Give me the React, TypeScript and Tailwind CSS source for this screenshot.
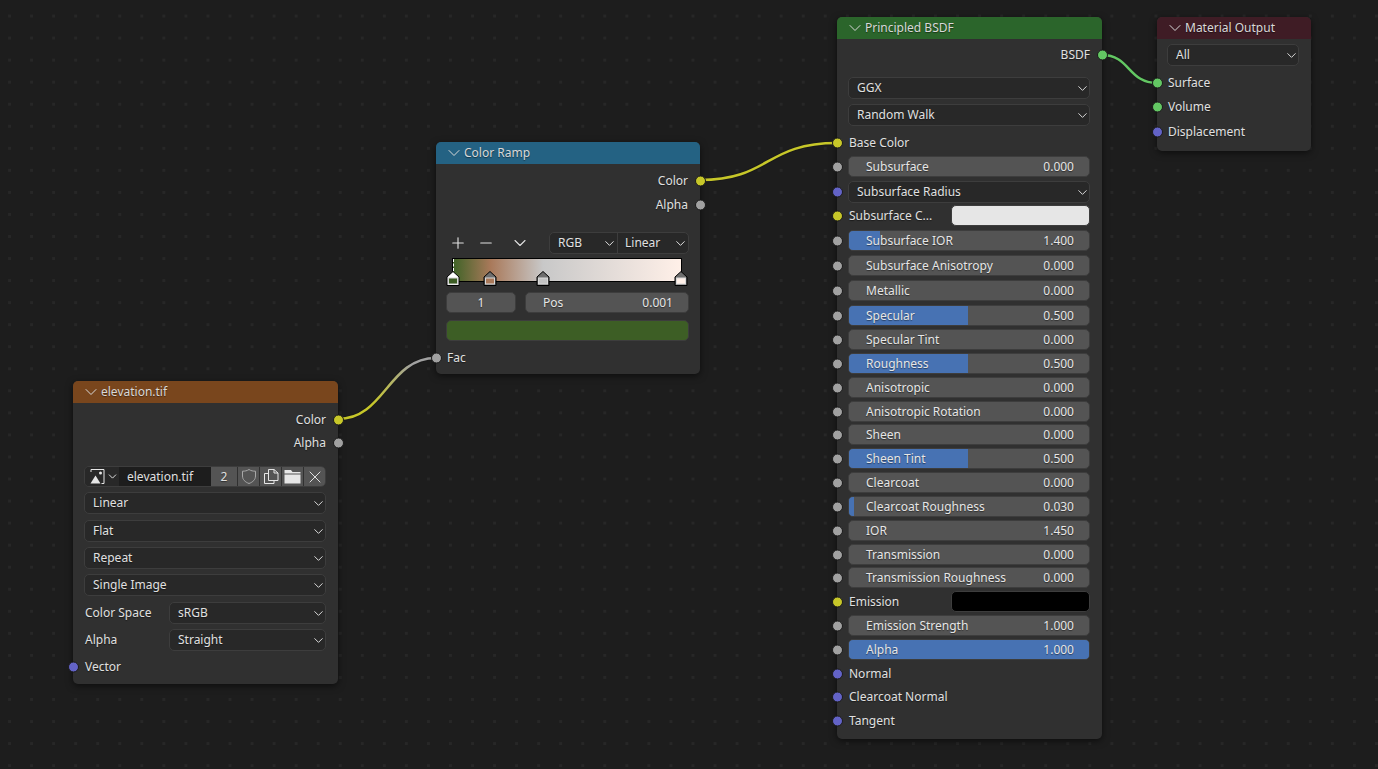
import type { ReactNode } from 'react';
import { ChevronDown, Minus, Plus, X } from 'lucide-react';

const YELLOW = 'bg-[#c7c729]';
const GRAY = 'bg-[#a1a1a1]';
const PURPLE = 'bg-[#6363c7]';
const GREEN = 'bg-[#63c763]';

type SocketSide = 'left' | 'right';

function Socket({ color, side = 'left' }: { color: string; side?: SocketSide }) {
  return (
    <span
      className={`absolute top-1/2 h-[11px] w-[11px] -translate-y-1/2 rounded-full border border-[#1a1a1a] ${color} ${
        side === 'left' ? 'left-[-5.5px]' : 'right-[-5.5px]'
      }`}
    />
  );
}

function NodeFrame({
  title,
  header,
  className,
  children,
}: {
  title: string;
  header: string;
  className: string;
  children: ReactNode;
}) {
  return (
    <div className={`absolute rounded-[5px] bg-[#303030] shadow-[0_2px_7px_rgba(0,0,0,0.55)] ${className}`}>
      <div className={`flex h-[22px] items-center rounded-t-[5px] pl-[8px] text-[#d8d8d8] ${header}`}>
        <ChevronDown size={20} strokeWidth={1.2} />
        <span>{title}</span>
      </div>
      {children}
    </div>
  );
}

function OutputRow({ label, color, h }: { label: string; color: string; h: string }) {
  return (
    <div className={h}>
      <div className="relative flex h-[20px] items-center justify-end pr-[12px] text-[#e0e0e0]">
        {label}
        <Socket color={color} side="right" />
      </div>
    </div>
  );
}

function InputRow({
  label,
  color,
  h,
  pad = 'pl-[12px]',
}: {
  label: string;
  color: string;
  h: string;
  pad?: string;
}) {
  return (
    <div className={h}>
      <div className={`relative flex h-[20px] items-center text-[#e0e0e0] ${pad}`}>
        {label}
        <Socket color={color} />
      </div>
    </div>
  );
}

function Select({ label }: { label: string }) {
  return (
    <div className="flex h-[22px] flex-1 items-center justify-between rounded-[5px] border border-[#3d3d3d] bg-[#282828] pl-[8px] text-[#e0e0e0]">
      <span>{label}</span>
      <ChevronDown size={15} strokeWidth={1.6} className="-mr-[1px] text-[#d8d8d8]" />
    </div>
  );
}

function SelectRow({ label, h, socket }: { label: string; h: string; socket?: string }) {
  return (
    <div className={h}>
      <div className="relative flex pl-[11px] pr-[12px]">
        <Select label={label} />
        {socket && <Socket color={socket} />}
      </div>
    </div>
  );
}

function LabeledSelect({ label, value, h }: { label: string; value: string; h: string }) {
  return (
    <div className={h}>
      <div className="flex items-center pl-[11px] pr-[12px] text-[#e0e0e0]">
        <span className="w-[85px] pl-[1px]">{label}</span>
        <Select label={value} />
      </div>
    </div>
  );
}

function Slider({
  label,
  value,
  h,
  fill,
}: {
  label: string;
  value: string;
  h: string;
  fill?: string;
}) {
  return (
    <div className={h}>
      <div className="relative pl-[11px] pr-[12px]">
        <div className="relative flex h-[21px] items-center justify-between overflow-hidden rounded-[5px] border border-[#3d3d3d] bg-[#545454] pl-[17px] pr-[15px] text-[#e6e6e6]">
          {fill && <span className={`absolute inset-y-0 left-0 bg-[#4772b3] ${fill}`} />}
          <span className="relative">{label}</span>
          <span className="relative">{value}</span>
        </div>
        <Socket color={GRAY} />
      </div>
    </div>
  );
}

function ColorRow({ label, swatch, h }: { label: string; swatch: string; h: string }) {
  return (
    <div className={h}>
      <div className="relative flex items-center pl-[12px] pr-[12px] text-[#e0e0e0]">
        <span className="w-[102px]">{label}</span>
        <span className={`h-[21px] flex-1 rounded-[5px] border border-[#3d3d3d] ${swatch}`} />
        <Socket color={YELLOW} />
      </div>
    </div>
  );
}

function RampHandle({ fill, active, className }: { fill: string; active?: boolean; className: string }) {
  return (
    <svg width="14" height="16" viewBox="0 0 14 16" className={`absolute top-[11px] ${className}`}>
      <path d="M1 15.5V7L7 1.5 13 7V15.5Z" fill={active ? '#ffffff' : '#6e6e6e'} stroke="#000000" strokeWidth="1" />
      <rect x="2" y="7.5" width="10" height="7" fill="#d8d8d8" />
      <rect x="3" y="8.5" width="8" height="5" fill={fill} />
    </svg>
  );
}

function ColorRampNode() {
  return (
    <NodeFrame title="Color Ramp" header="bg-[#246283]" className="left-[436px] top-[142px] h-[232px] w-[264px]">
      <div className="pt-[7px]">
        <OutputRow label="Color" color={YELLOW} h="h-[24px]" />
        <OutputRow label="Alpha" color={GRAY} h="h-[37px]" />
      </div>
      <div className="flex h-[22px] items-center pl-[13px] pr-[11px] text-[#e0e0e0]">
        <Plus size={18} strokeWidth={1.5} />
        <Minus size={18} strokeWidth={1.5} className="ml-[10px]" />
        <ChevronDown size={20} strokeWidth={1.3} className="ml-[15px]" />
        <div className="ml-[19px] flex h-[22px] flex-1 rounded-[5px] border border-[#3d3d3d] bg-[#282828]">
          <div className="flex w-[68px] items-center justify-between border-r border-[#3d3d3d] pl-[8px]">
            <span>RGB</span>
            <ChevronDown size={15} strokeWidth={1.6} />
          </div>
          <div className="flex flex-1 items-center justify-between pl-[7px]">
            <span>Linear</span>
            <ChevronDown size={15} strokeWidth={1.6} />
          </div>
        </div>
      </div>
      <div className="relative ml-[16px] mr-[18px] mt-[4px] h-[24px] border border-black bg-[linear-gradient(90deg,#3f6327_0%,#a9795a_16.5%,#c8c8c8_39.5%,#fff0e8_100%)]">
        <span className="absolute left-0 top-0 h-[12px] border-l border-dashed border-white" />
        <RampHandle fill="#3d5e25" active className="left-[-7px]" />
        <RampHandle fill="#a9795a" className="left-[30px]" />
        <RampHandle fill="#c4c4c4" className="left-[83px]" />
        <RampHandle fill="#fff0e8" className="left-[221px]" />
      </div>
      <div className="mt-[10px] flex gap-[9px] pl-[10px] pr-[11px] text-[#e6e6e6]">
        <div className="flex h-[21px] w-[70px] items-center justify-center rounded-[5px] border border-[#3d3d3d] bg-[#545454]">1</div>
        <div className="flex h-[21px] flex-1 items-center justify-between rounded-[5px] border border-[#3d3d3d] bg-[#545454] pl-[17px] pr-[15px]">
          <span>Pos</span>
          <span>0.001</span>
        </div>
      </div>
      <div className="ml-[10px] mr-[11px] mt-[7px] h-[21px] rounded-[5px] border border-[#3d3d3d] bg-[#3d5e25]" />
      <div className="mt-[7px]">
        <InputRow label="Fac" color={GRAY} h="h-[20px]" pad="pl-[11px]" />
      </div>
    </NodeFrame>
  );
}

function ImageTextureNode() {
  return (
    <NodeFrame title="elevation.tif" header="bg-[#79461d]" className="left-[73px] top-[381px] h-[303px] w-[265px]">
      <div className="pt-[7px]">
        <OutputRow label="Color" color={YELLOW} h="h-[23px]" />
        <OutputRow label="Alpha" color={GRAY} h="h-[33px]" />
      </div>
      <div className="ml-[11px] mr-[12px] flex h-[21px] items-stretch overflow-hidden rounded-[5px] border border-[#3d3d3d] text-[#e0e0e0]">
        <div className="flex w-[34px] items-center bg-[#282828] pl-[4px]">
          <svg width="17" height="17" viewBox="0 0 16 17" fill="none" className="shrink-0">
            <path d="M3 1.5H14.5V15.5H12" stroke="#e6e6e6" strokeWidth="1" />
            <path d="M1.5 4V1.5H4" stroke="#e6e6e6" strokeWidth="1" />
            <path d="M1 15.5L6 7.5L11 15.5Z" fill="#e6e6e6" />
            <circle cx="11" cy="5" r="1.5" fill="#e6e6e6" />
          </svg>
          <ChevronDown size={13} strokeWidth={1.8} className="shrink-0" />
        </div>
        <div className="flex w-[92px] items-center bg-[#1d1d1d] pl-[8px]">elevation.tif</div>
        <div className="flex w-[27px] items-center justify-center border-r border-[#303030] bg-[#545454]">2</div>
        <div className="flex w-[22px] items-center justify-center border-r border-[#303030] bg-[#545454]">
          <svg width="16" height="17" viewBox="0 0 16 17" fill="none">
            <path d="M8 1.5C10 2.8 12 3.2 14.5 3.2V8C14.5 11.5 12 14 8 15.5 4 14 1.5 11.5 1.5 8V3.2C4 3.2 6 2.8 8 1.5Z" stroke="#a8a8a8" strokeWidth="1" />
          </svg>
        </div>
        <div className="flex w-[22px] items-center justify-center border-r border-[#303030] bg-[#545454]">
          <svg width="16" height="17" viewBox="0 0 16 17" fill="none">
            <path d="M5.5 12.5V1.5H11L15 5V12.5H5.5Z" stroke="#e6e6e6" strokeWidth="1" />
            <path d="M11 1.5V5H15" stroke="#e6e6e6" strokeWidth="1" />
            <path d="M5.5 5.5H1.5V15.5H11V12.5" stroke="#e6e6e6" strokeWidth="1" />
          </svg>
        </div>
        <div className="flex w-[22px] items-center justify-center border-r border-[#303030] bg-[#545454]">
          <svg width="17" height="15" viewBox="0 0 17 15">
            <path d="M0.5 1H7L8.5 3H16.5V4.5H0.5Z" fill="#e6e6e6" />
            <rect x="0.5" y="5.5" width="16" height="9" fill="#e6e6e6" />
          </svg>
        </div>
        <div className="flex flex-1 items-center justify-center bg-[#545454]">
          <X size={20} strokeWidth={1.2} className="shrink-0" />
        </div>
      </div>
      <div className="mt-[5px]">
        <SelectRow label="Linear" h="h-[28px]" />
        <SelectRow label="Flat" h="h-[27px]" />
        <SelectRow label="Repeat" h="h-[27px]" />
        <SelectRow label="Single Image" h="h-[28px]" />
        <LabeledSelect label="Color Space" value="sRGB" h="h-[27px]" />
        <LabeledSelect label="Alpha" value="Straight" h="h-[28px]" />
        <InputRow label="Vector" color={PURPLE} h="h-[20px]" />
      </div>
    </NodeFrame>
  );
}

function PrincipledNode() {
  return (
    <NodeFrame title="Principled BSDF" header="bg-[#2b652b]" className="left-[837px] top-[17px] h-[722px] w-[265px]">
      <div className="pt-[6px]">
        <OutputRow label="BSDF" color={GREEN} h="h-[32px]" />
      </div>
      <SelectRow label="GGX" h="h-[27px]" />
      <SelectRow label="Random Walk" h="h-[29px]" />
      <InputRow label="Base Color" color={YELLOW} h="h-[23px]" />
      <Slider label="Subsurface" value="0.000" h="h-[25px]" />
      <SelectRow label="Subsurface Radius" h="h-[24px]" socket={PURPLE} />
      <ColorRow label="Subsurface C..." swatch="bg-[#e6e6e6]" h="h-[25px]" />
      <Slider label="Subsurface IOR" value="1.400" h="h-[25px]" fill="w-[31px]" />
      <Slider label="Subsurface Anisotropy" value="0.000" h="h-[25px]" />
      <Slider label="Metallic" value="0.000" h="h-[25px]" />
      <Slider label="Specular" value="0.500" h="h-[24px]" fill="w-[119px]" />
      <Slider label="Specular Tint" value="0.000" h="h-[24px]" />
      <Slider label="Roughness" value="0.500" h="h-[24px]" fill="w-[119px]" />
      <Slider label="Anisotropic" value="0.000" h="h-[24px]" />
      <Slider label="Anisotropic Rotation" value="0.000" h="h-[23px]" />
      <Slider label="Sheen" value="0.000" h="h-[24px]" />
      <Slider label="Sheen Tint" value="0.500" h="h-[24px]" fill="w-[119px]" />
      <Slider label="Clearcoat" value="0.000" h="h-[24px]" />
      <Slider label="Clearcoat Roughness" value="0.030" h="h-[24px]" fill="w-[5px]" />
      <Slider label="IOR" value="1.450" h="h-[24px]" />
      <Slider label="Transmission" value="0.000" h="h-[23px]" />
      <Slider label="Transmission Roughness" value="0.000" h="h-[24px]" />
      <ColorRow label="Emission" swatch="bg-black" h="h-[24px]" />
      <Slider label="Emission Strength" value="1.000" h="h-[24px]" />
      <Slider label="Alpha" value="1.000" h="h-[25px]" fill="w-full" />
      <InputRow label="Normal" color={PURPLE} h="h-[23px]" />
      <InputRow label="Clearcoat Normal" color={PURPLE} h="h-[24px]" />
      <InputRow label="Tangent" color={PURPLE} h="h-[20px]" />
    </NodeFrame>
  );
}

function MaterialOutputNode() {
  return (
    <NodeFrame title="Material Output" header="bg-[#3f1c25]" className="left-[1157px] top-[17px] h-[134px] w-[154px]">
      <div className="mt-[5px] flex h-[22px] pl-[10px] pr-[12px]">
        <Select label="All" />
      </div>
      <div className="mt-[7px]">
        <InputRow label="Surface" color={GREEN} h="h-[24px]" pad="pl-[11px]" />
        <InputRow label="Volume" color={GREEN} h="h-[25px]" pad="pl-[11px]" />
        <InputRow label="Displacement" color={PURPLE} h="h-[20px]" pad="pl-[11px]" />
      </div>
    </NodeFrame>
  );
}

export default function App() {
  return (
    <div className="relative h-[769px] w-[1378px] overflow-hidden bg-[#1d1d1d] bg-[radial-gradient(circle,#272727_1.4px,transparent_1.6px)] bg-[size:22.05px_22.05px] bg-[position:-1.5px_5px] font-['Noto_Sans',sans-serif] text-[12px] [text-shadow:0_1px_1px_rgba(0,0,0,0.45)]">
      <svg width="1378" height="769" className="absolute left-0 top-0">
        <defs>
          <linearGradient id="facWire" x1="338" y1="0" x2="436" y2="0" gradientUnits="userSpaceOnUse">
            <stop offset="0.35" stopColor="#c7c729" />
            <stop offset="0.75" stopColor="#a1a1a1" />
          </linearGradient>
        </defs>
        <g fill="none" strokeWidth="4.5" stroke="#1a1a1a">
          <path d="M338 419C385 419 388 358 436 358" />
          <path d="M700 180C770 180 765 143 837 143" />
          <path d="M1102 55C1130 55 1128 83 1157 83" />
        </g>
        <g fill="none" strokeWidth="2.5">
          <path d="M338 419C385 419 388 358 436 358" stroke="url(#facWire)" />
          <path d="M700 180C770 180 765 143 837 143" stroke="#c7c729" />
          <path d="M1102 55C1130 55 1128 83 1157 83" stroke="#63c763" />
        </g>
      </svg>
      <ImageTextureNode />
      <ColorRampNode />
      <PrincipledNode />
      <MaterialOutputNode />
    </div>
  );
}
